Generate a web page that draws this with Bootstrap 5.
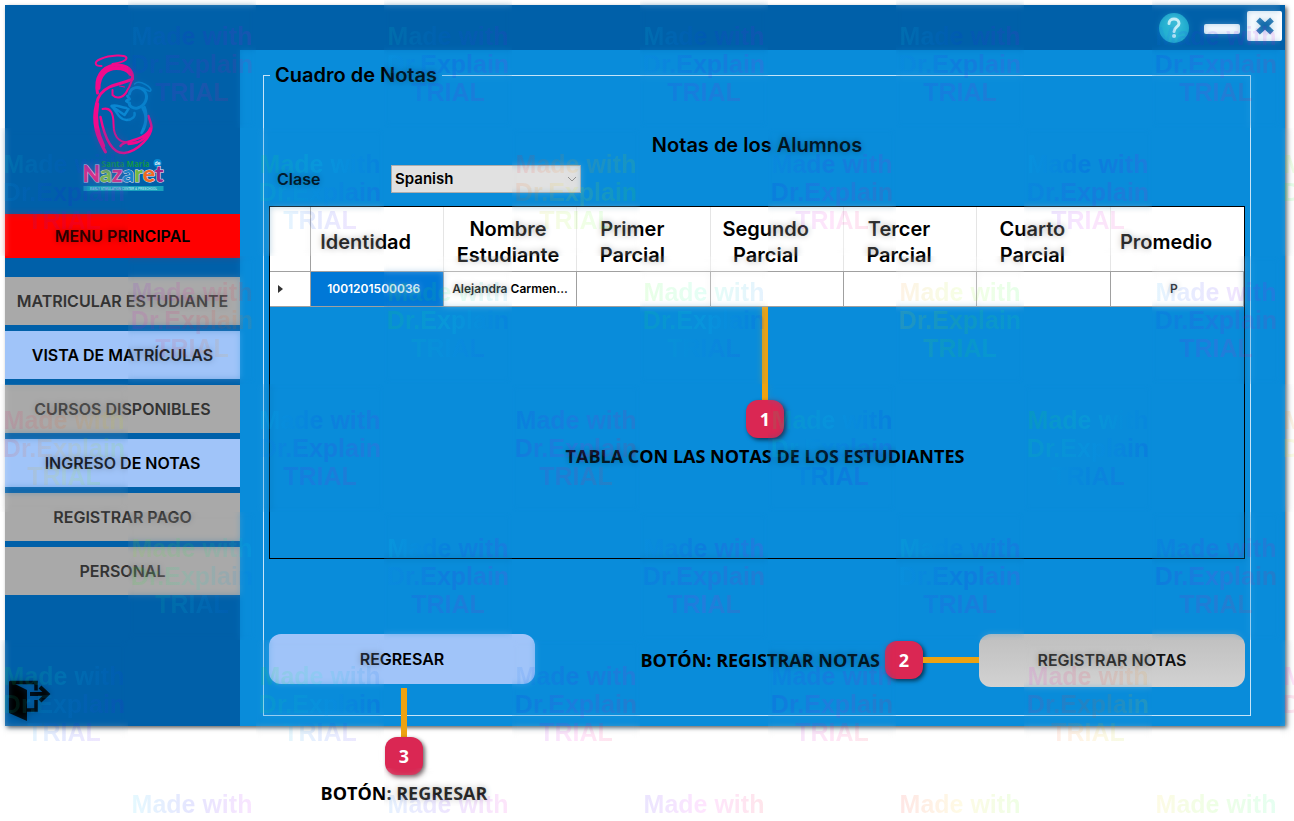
<!DOCTYPE html>
<html lang="es">
<head>
<meta charset="utf-8">
<meta name="viewport" content="width=device-width, initial-scale=1">
<title>Cuadro de Notas</title>
<link href="https://cdn.jsdelivr.net/npm/bootstrap@5.3.0/dist/css/bootstrap.min.css" rel="stylesheet">
<style>
  :root { --navy:#0060a9; --sky:#098cda; --soft:#a0c4f9; --ash:#a9a9a9; --rose:#da2753; --amber:#eda211; }
  body { font-family:"Inter","Liberation Sans",sans-serif; font-weight:600; color:#000; background:#fff; min-height:100vh; overflow-x:hidden; }
  .app-window { background:var(--navy); margin:5px 9px 0 5px; box-shadow:2px 2px 4px rgba(0,0,0,.6); }
  .side { width:235px; flex:none; }
  .brand { height:209px; padding-top:35px; }
  .menu-head { background:red; height:44px; font-size:16px; line-height:44px; margin-bottom:19px; }
  .menu-item { height:48px; border:0; background:var(--soft); color:#000; font-size:16px; font-weight:600; padding:0; white-space:nowrap; }
  .menu-item:disabled { background:var(--ash); color:#333; }
  .top-bar { height:45px; padding:6px 3px 0 0; }
  .bare { border:0; background:none; padding:0; line-height:0; }
  .workspace { background:var(--sky); padding:13px 34px 10px 23px; }
  .notes-box { border:1px solid #c5e4f8; padding:0 5px 28px; }
  .notes-box legend { float:none; width:auto; margin:0 0 46px 1px; padding:0 5px; font-size:20px; line-height:24px; font-weight:600; }
  .notes-title { font-size:20px; line-height:24px; font-weight:600; margin:0 0 8px; }
  .clase-label { width:122px; padding-left:8px; font-size:16px; line-height:20px; }
  .clase-select { width:190px; height:28px; border:1px solid #adadad; border-radius:0; background-color:#e1e1e1; font-size:15px; font-weight:600; line-height:20px; padding:0 20px 0 3px; color:#000;
    background-image:url("data:image/svg+xml,%3Csvg xmlns='http://www.w3.org/2000/svg' viewBox='0 0 10 10'%3E%3Cpath d='M1 3l4 4 4-4' fill='none' stroke='%23777'/%3E%3C/svg%3E"); background-size:10px 10px; background-position:right 3px center; }
  .grid-panel { border:1px solid #000; margin-top:13px; padding-bottom:90px; }
  .notes-table { width:100%; table-layout:fixed; border-collapse:collapse; background:#fff; }
  .notes-table th, .notes-table td { text-align:center; vertical-align:middle; }
  .notes-table th { height:64px; font-size:20px; line-height:26px; font-weight:600; padding:9px 22px 2px 0; border-right:1px solid #e5e5e5; border-bottom:1px solid #a0a0a0; }
  .notes-table th.full { padding-right:4px; }
  .notes-table th:first-child { width:40px; border-right-color:#a0a0a0; padding:0; }
  .notes-table th:last-child { border-right:0; }
  .notes-table td { height:35px; font-size:12px; line-height:16px; border:1px solid #a0a0a0; padding:0 3px; white-space:nowrap; overflow:hidden; text-overflow:ellipsis; }
  .notes-table td:first-child { border-left:0; padding-left:7px; text-align:left; }
  .notes-table td.picked { background:#0078d7; color:#fff; padding-right:9px; }
  .notes-table td:last-child { padding-right:9px; }
  .callout-1 { padding-left:16px; }
  .stem-v { width:6px; height:93px; background:var(--amber); }
  .stem-h { width:56px; height:6px; background:var(--amber); }
  .pin { width:38px; height:38px; flex:none; border-radius:12px; background:var(--rose); color:#fff; font:700 18px/38px "Open Sans",sans-serif; text-align:center; box-shadow:2px 2px 4px rgba(0,0,0,.6); }
  .hint { font:700 18px/24px "Open Sans",sans-serif; white-space:nowrap; }
  .action-row { margin-top:75px; }
  .action { width:266px; border:0; border-radius:12px; font-size:16px; font-weight:600; }
  .action-back { height:50px; background:var(--soft); }
  .action-save { height:53px; background:linear-gradient(#bfbfbf,#d2d2d2); color:#111; }
  .callout-3 { position:absolute; top:54px; left:0; width:100%; padding-left:4px; }
  .callout-3 .stem-v { height:49px; }
  .marks { position:absolute; inset:0; overflow:hidden; pointer-events:none; display:grid; grid-template-columns:repeat(11,128px); grid-auto-rows:128px; }
  .stamp { position:relative; padding-top:22px; text-align:center; font:700 25px/28px "Liberation Sans",sans-serif; white-space:nowrap; }
  .stamp::before { content:""; position:absolute; inset:0; backdrop-filter:blur(3px); opacity:.28; }
  .stamp span { position:relative; display:block; color:transparent; -webkit-background-clip:text; background-clip:text; }
</style>
</head>
<body class="position-relative">
<div class="app-window d-flex">
  <nav class="side d-flex flex-column" aria-label="Menú principal">
    <div class="brand d-flex justify-content-center align-items-start">
      <svg width="120" height="160" viewBox="2.500 0 120 160" role="img" aria-label="Santa María de Nazaret">
        <g fill="none" stroke="#f20a8c" stroke-linecap="round" stroke-linejoin="round">
          <path d="M41 26C34 26 33 22 40 19C49 15 66 14 66 18C66 21 58 23 52 24" stroke-width="2"/>
          <path d="M37 53C34 38 41 27 54 25C66 24 73 30 72 39C67 42 58 43 49 47C41 51 37 56 36 64C31 83 37 98 45 112" stroke-width="3"/>
          <path d="M38 48C38 35 46 28 56 28C63 28 68 31 70 34" stroke-width="4"/>
          <path d="M72 39C70 43 70 46 67 50C64 57 57 60 52 55L52 50" stroke-width="2"/>
          <path d="M59 46l5 1" stroke-width="1"/>
          <path d="M37 64C34 80 37 94 43 106" stroke-width="3.500"/>
          <path d="M42 69C50 67 53 73 53 84C53 99 60 105 78 102" stroke-width="2"/>
          <path d="M40 77C44 97 51 114 64 113C78 111 91 96 91 87C91 84 89 80 88 76" stroke-width="2.500"/>
          <path d="M60 106C62 100 85 102 90 88C90 95 80 104 68 104" stroke-width="2.500"/>
        </g>
        <g fill="none" stroke="#0a87d2" stroke-linecap="round" stroke-linejoin="round" stroke-width="3">
          <path d="M69 54C70 47 79 45 84 51C89 58 84 66 77 68C73 69 68 66 69 63L66 61L69 59L67 56"/>
          <path d="M74 44C79 39 93 48 90 51C88 52 85 49 82 48" stroke-width="1.500"/>
          <path d="M66 68C59 67 55 64 51 66C56 70 58 80 66 80C72 80 75 76 74 73M51 66L64 75L68 69" stroke-width="2.500"/>
          <path d="M82 68C88 78 84 86 81 93C86 87 87 74 84 67" stroke-width="2.500"/>
        </g>
        <text x="41" y="127" fill="#149747" font-family="Open Sans" font-weight="700" font-size="8">Santa María</text>
        <circle cx="97" cy="123" r="4" fill="#078bd2"/><text x="94" y="125" fill="#fff" font-family="Open Sans" font-size="5">de</text>
        <text x="22" y="142" font-family="Lato" font-weight="900" font-size="23" stroke="#f3e6f2" stroke-width="1" paint-order="stroke"><tspan fill="#e62386">N</tspan><tspan fill="#75b843">a</tspan><tspan fill="#df2785">z</tspan><tspan fill="#1884cb">a</tspan><tspan fill="#75b843">r</tspan><tspan fill="#ef6824">e</tspan><tspan fill="#9b2487">t</tspan></text>
        <rect x="23" y="146" width="80" height="5" fill="#18a2bd"/>
        <text x="63" y="150" text-anchor="middle" fill="#a9deea" font-family="Liberation Sans" font-size="3">EARLY STIMULATION CENTER &amp; PRESCHOOL</text>
      </svg>
    </div>
    <div class="menu-head text-center">MENU PRINCIPAL</div>
    <div class="d-grid" style="gap:6px">
      <button class="menu-item" disabled>MATRICULAR ESTUDIANTE</button>
      <button class="menu-item">VISTA DE MATRÍCULAS</button>
      <button class="menu-item" disabled>CURSOS DISPONIBLES</button>
      <button class="menu-item">INGRESO DE NOTAS</button>
      <button class="menu-item" disabled>REGISTRAR PAGO</button>
      <button class="menu-item" disabled>PERSONAL</button>
    </div>
    <button class="bare mt-auto ms-1 mb-1 align-self-start" aria-label="Salir">
      <svg width="42" height="42" viewBox="0 0 42 42" fill="none" stroke="#000" stroke-width="3.500"><path d="M0 1l18 9v31L0 33z" fill="#000" stroke="none"/><path d="M1 2.500h26v8M27 20v10h-9"/><path d="M21 14h18M31 7l7.500 7-7.500 7" stroke-width="4"/></svg>
    </button>
  </nav>
  <div class="flex-grow-1" style="min-width:0">
    <header class="top-bar d-flex justify-content-end align-items-start">
      <button class="bare" aria-label="Ayuda" style="margin:2px 15px 0 0">
        <svg width="30" height="30" viewBox="0 0 30 30"><circle cx="15" cy="15" r="15" fill="#25b2d1"/><path d="M10 10.500C10 4.500 20 4.500 20 10.500C20 14 15 14 15 18.500" fill="none" stroke="#e6fbff" stroke-width="3" stroke-linecap="round"/><circle cx="15" cy="23" r="2" fill="#e6fbff"/></svg>
      </button>
      <button class="bare" aria-label="Minimizar" style="margin:13px 7px 0 0"><svg width="36" height="10"><rect width="36" height="10" rx="2" fill="#f7fbff"/></svg></button>
      <button class="bare" aria-label="Cerrar"><svg width="35" height="30" viewBox="0 0 35 30"><rect width="35" height="30" rx="2" fill="#f9fcff"/><path d="M11 8.500L25 21.500M25 8.500L11 21.500" stroke="#0864a7" stroke-width="5.500"/></svg></button>
    </header>
    <main class="workspace">
      <fieldset class="notes-box">
        <legend>Cuadro de Notas</legend>
        <h1 class="notes-title text-center">Notas de los Alumnos</h1>
        <div class="d-flex align-items-center">
          <label class="clase-label" for="clase">Clase</label>
          <select id="clase" class="form-select clase-select"><option>Spanish</option></select>
        </div>
        <div class="grid-panel">
          <table class="notes-table">
            <thead><tr><th aria-label="Fila"></th><th>Identidad</th><th class="full">Nombre<br>Estudiante</th><th>Primer<br>Parcial</th><th>Segundo<br>Parcial</th><th>Tercer<br>Parcial</th><th>Cuarto<br>Parcial</th><th>Promedio</th></tr></thead>
            <tbody><tr><td><svg width="6" height="10"><path d="M1 1l5 4-5 4z" fill="#333"/></svg></td><td class="picked">1001201500036</td><td>Alejandra Carmen...</td><td></td><td></td><td></td><td></td><td>P</td></tr></tbody>
          </table>
          <div class="callout-1 d-flex flex-column align-items-center">
            <div class="stem-v"></div>
            <div class="pin">1</div>
            <div class="hint" style="margin-top:6px">TABLA CON LAS NOTAS DE LOS ESTUDIANTES</div>
          </div>
        </div>
        <div class="action-row d-flex justify-content-between align-items-start">
          <div class="position-relative">
            <button class="action action-back">REGRESAR</button>
            <div class="callout-3 d-flex flex-column align-items-center">
              <div class="stem-v"></div>
              <div class="pin">3</div>
              <div class="hint" style="margin-top:6px">BOTÓN: REGRESAR</div>
            </div>
          </div>
          <div class="d-flex align-items-center">
            <span class="hint" style="margin-right:5px">BOTÓN: REGISTRAR NOTAS</span>
            <span class="pin">2</span>
            <span class="stem-h"></span>
            <button class="action action-save">REGISTRAR NOTAS</button>
          </div>
        </div>
      </fieldset>
    </main>
  </div>
</div>
<div class="marks" id="marks" aria-hidden="true"></div>
<script src="https://cdn.jsdelivr.net/npm/bootstrap@5.3.0/dist/js/bootstrap.bundle.min.js"></script>
<script>
  // Trial stamps alternate like a checkerboard, each with its own rainbow run.
  const hues = [[0,200,0,170,0,180,0,180,0,210,0],[170,0,130,0,350,0,210,0,190,0,90],[0,270,0,100,0,110,0,30,0,200,0],[330,0,180,0,230,0,140,0,120,0,30],[0,90,0,180,0,200,0,170,0,220,0],[130,0,120,0,210,0,220,0,300,0,300],[0,190,0,210,0,250,0,0,0,50,0]];
  const marks = document.getElementById('marks');
  hues.forEach((row, r) => row.forEach((hue, c) => {
    const cell = document.createElement('div');
    if ((r + c) % 2) {
      cell.className = 'stamp';
      ['Made with', 'Dr.Explain', 'TRIAL'].forEach((word, i) => {
        if (r === 6 && i) return;
        const line = document.createElement('span');
        const h = hue + i * 25;
        line.textContent = word;
        line.style.backgroundImage = `linear-gradient(90deg,hsla(${h},100%,50%,.1),hsla(${h + 50},100%,50%,.1),hsla(${h + 100},100%,50%,.1))`;
        cell.append(line);
      });
    }
    marks.append(cell);
  }));
</script>
</body>
</html>
